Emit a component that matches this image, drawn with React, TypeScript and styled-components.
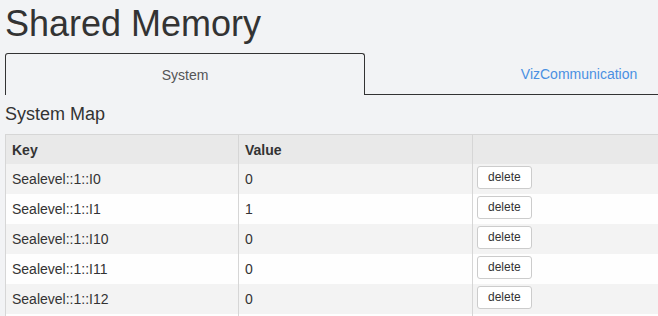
import React, { useState } from "react";
import styled, { createGlobalStyle } from "styled-components";

const GlobalStyle = createGlobalStyle`
  html, body {
    margin: 0;
    padding: 0;
    background: #f2f3f5;
    overflow: hidden;
  }
  body {
    font-family: "Liberation Sans", Arial, sans-serif;
    color: #333;
  }
`;

const Page = styled.div`
  width: 788px;
  padding: 4px 0 0 5px;
`;

const Title = styled.h1`
  margin: 0;
  font-size: 36px;
  font-weight: normal;
  line-height: 40px;
  color: #333;
`;

const TabBar = styled.div`
  display: flex;
  margin-top: 9px;
`;

const Tab = styled.div<{ $active?: boolean }>`
  flex: 1 1 auto;
  box-sizing: border-box;
  height: 42px;
  padding: 0 10px;
  display: flex;
  align-items: center;
  justify-content: center;
  font-size: 14px;
  cursor: pointer;
  color: ${(p) => (p.$active ? "#555" : "#4a90e2")};
  border: ${(p) => (p.$active ? "1px solid #333" : "none")};
  border-bottom: ${(p) => (p.$active ? "none" : "1px solid #333")};
  border-radius: ${(p) => (p.$active ? "3px 3px 0 0" : "0")};
`;

const SectionTitle = styled.h2`
  margin: 9px 0 0;
  font-size: 18px;
  font-weight: normal;
  line-height: 21px;
  color: #333;
`;

const Table = styled.table`
  margin-top: 9px;
  width: 788px;
  table-layout: fixed;
  border-collapse: collapse;
  border: 1px solid #d6d6d6;
  font-size: 14px;
`;

const HeadCell = styled.th`
  height: 29px;
  padding: 0 6px;
  text-align: left;
  font-weight: bold;
  background: #e9e9e9;
  border-left: 1px solid #d6d6d6;
  color: #333;
`;

const Row = styled.tr<{ $odd: boolean }>`
  background: ${(p) => (p.$odd ? "#f3f3f3" : "#fefefe")};
`;

const Cell = styled.td<{ $tight?: boolean }>`
  height: 30px;
  padding: 0 ${(p) => (p.$tight ? "4px" : "6px")};
  vertical-align: middle;
  border-left: 1px solid #d6d6d6;
  color: #333;
`;

const DeleteButton = styled.button`
  box-sizing: border-box;
  height: 23px;
  margin-bottom: 4px;
  padding: 0 10px;
  font-family: "Liberation Sans", Arial, sans-serif;
  font-size: 12px;
  color: #333;
  background: #fff;
  border: 1px solid #ccc;
  border-radius: 3px;
  cursor: pointer;
`;

const initialRows = [
  { key: "Sealevel::1::I0", value: "0" },
  { key: "Sealevel::1::I1", value: "1" },
  { key: "Sealevel::1::I10", value: "0" },
  { key: "Sealevel::1::I11", value: "0" },
  { key: "Sealevel::1::I12", value: "0" },
  { key: "Sealevel::1::I13", value: "0" },
];

const App: React.FC = () => {
  const [tab, setTab] = useState<string>("system");
  const [rows, setRows] = useState(initialRows);

  const removeRow = (key: string) => {
    setRows(rows.filter((r) => r.key !== key));
  };

  return (
    <>
      <GlobalStyle />
      <Page>
        <Title>Shared Memory</Title>
        <TabBar>
          <Tab $active={tab === "system"} onClick={() => setTab("system")}>
            System
          </Tab>
          <Tab $active={tab === "viz"} onClick={() => setTab("viz")}>
            VizCommunication
          </Tab>
        </TabBar>
        <SectionTitle>System Map</SectionTitle>
        <Table>
          <colgroup>
            <col style={{ width: 233 }} />
            <col style={{ width: 234 }} />
            <col />
          </colgroup>
          <thead>
            <tr>
              <HeadCell>Key</HeadCell>
              <HeadCell>Value</HeadCell>
              <HeadCell></HeadCell>
            </tr>
          </thead>
          <tbody>
            {rows.map((r, i) => (
              <Row key={r.key} $odd={i % 2 === 0}>
                <Cell>{r.key}</Cell>
                <Cell>{r.value}</Cell>
                <Cell $tight>
                  <DeleteButton onClick={() => removeRow(r.key)}>
                    delete
                  </DeleteButton>
                </Cell>
              </Row>
            ))}
          </tbody>
        </Table>
      </Page>
    </>
  );
};

export default App;
